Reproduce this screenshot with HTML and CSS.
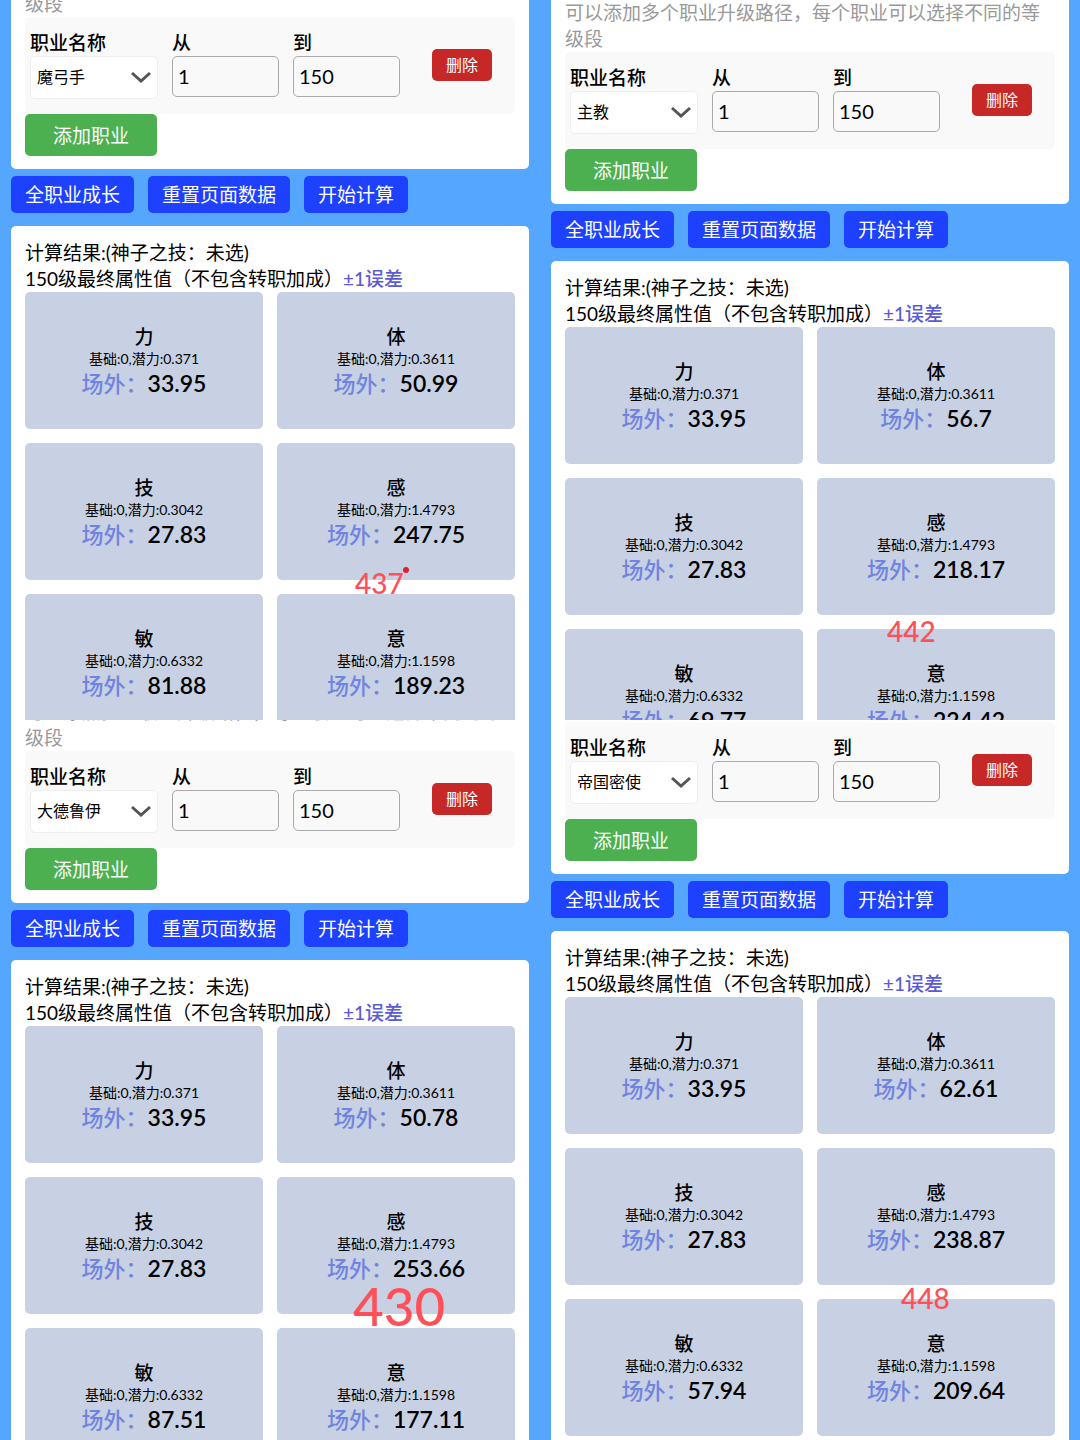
FILE: index.html
```
<!DOCTYPE html>
<html lang="zh-CN">
<head>
  <meta charset="UTF-8">
  <meta name="viewport" content="width=device-width, initial-scale=1.0">
  <title>职业成长计算</title>
  <link rel="stylesheet" href="styles.css">
</head>
<body>
  <main class="board">

    <!-- 魔弓手 -->
    <section class="pane">
      <div class="content scroll-49">
        <div class="card">
          <p class="hint">可以添加多个职业升级路径，每个职业可以选择不同的等级段</p>
          <div class="job-row">
            <div class="field">
              <label for="job-1">职业名称</label>
              <div class="select-box">
                <select id="job-1"><option>魔弓手</option></select>
                <svg class="arrow" viewBox="0 0 22 12"><path d="M2 2l9 8 9-8"/></svg>
              </div>
            </div>
            <div class="field">
              <label for="from-1">从</label>
              <input id="from-1" type="text" value="1">
            </div>
            <div class="field">
              <label for="to-1">到</label>
              <input id="to-1" type="text" value="150">
            </div>
            <button class="delete-btn">删除</button>
          </div>
          <button class="add-btn">添加职业</button>
        </div>
        <div class="toolbar">
          <button>全职业成长</button>
          <button>重置页面数据</button>
          <button>开始计算</button>
        </div>
        <div class="card">
          <p>计算结果:(神子之技：未选)</p>
          <p>150级最终属性值（不包含转职加成）<span class="error">±1误差</span></p>
          <div class="stats">
            <div class="stat"><h3>力</h3><p class="base">基础:0,潜力:0.371</p><p class="value"><span>场外：</span>33.95</p></div>
            <div class="stat"><h3>体</h3><p class="base">基础:0,潜力:0.3611</p><p class="value"><span>场外：</span>50.99</p></div>
            <div class="stat"><h3>技</h3><p class="base">基础:0,潜力:0.3042</p><p class="value"><span>场外：</span>27.83</p></div>
            <div class="stat"><h3>感</h3><p class="base">基础:0,潜力:1.4793</p><p class="value"><span>场外：</span>247.75</p></div>
            <div class="stat"><h3>敏</h3><p class="base">基础:0,潜力:0.6332</p><p class="value"><span>场外：</span>81.88</p></div>
            <div class="stat"><h3>意</h3><p class="base">基础:0,潜力:1.1598</p><p class="value"><span>场外：</span>189.23</p></div>
          </div>
        </div>
      </div>
      <span class="note note-437">437</span>
      <span class="dot"></span>
    </section>

    <!-- 主教 -->
    <section class="pane">
      <div class="content scroll-14">
        <div class="card">
          <p class="hint">可以添加多个职业升级路径，每个职业可以选择不同的等级段</p>
          <div class="job-row">
            <div class="field">
              <label for="job-2">职业名称</label>
              <div class="select-box">
                <select id="job-2"><option>主教</option></select>
                <svg class="arrow" viewBox="0 0 22 12"><path d="M2 2l9 8 9-8"/></svg>
              </div>
            </div>
            <div class="field">
              <label for="from-2">从</label>
              <input id="from-2" type="text" value="1">
            </div>
            <div class="field">
              <label for="to-2">到</label>
              <input id="to-2" type="text" value="150">
            </div>
            <button class="delete-btn">删除</button>
          </div>
          <button class="add-btn">添加职业</button>
        </div>
        <div class="toolbar">
          <button>全职业成长</button>
          <button>重置页面数据</button>
          <button>开始计算</button>
        </div>
        <div class="card">
          <p>计算结果:(神子之技：未选)</p>
          <p>150级最终属性值（不包含转职加成）<span class="error">±1误差</span></p>
          <div class="stats">
            <div class="stat"><h3>力</h3><p class="base">基础:0,潜力:0.371</p><p class="value"><span>场外：</span>33.95</p></div>
            <div class="stat"><h3>体</h3><p class="base">基础:0,潜力:0.3611</p><p class="value"><span>场外：</span>56.7</p></div>
            <div class="stat"><h3>技</h3><p class="base">基础:0,潜力:0.3042</p><p class="value"><span>场外：</span>27.83</p></div>
            <div class="stat"><h3>感</h3><p class="base">基础:0,潜力:1.4793</p><p class="value"><span>场外：</span>218.17</p></div>
            <div class="stat"><h3>敏</h3><p class="base">基础:0,潜力:0.6332</p><p class="value"><span>场外：</span>69.77</p></div>
            <div class="stat"><h3>意</h3><p class="base">基础:0,潜力:1.1598</p><p class="value"><span>场外：</span>224.42</p></div>
          </div>
        </div>
      </div>
      <span class="note note-442">442</span>
    </section>

    <!-- 大德鲁伊 -->
    <section class="pane">
      <div class="content scroll-35">
        <div class="card">
          <p class="hint">可以添加多个职业升级路径，每个职业可以选择不同的等级段</p>
          <div class="job-row">
            <div class="field">
              <label for="job-3">职业名称</label>
              <div class="select-box">
                <select id="job-3"><option>大德鲁伊</option></select>
                <svg class="arrow" viewBox="0 0 22 12"><path d="M2 2l9 8 9-8"/></svg>
              </div>
            </div>
            <div class="field">
              <label for="from-3">从</label>
              <input id="from-3" type="text" value="1">
            </div>
            <div class="field">
              <label for="to-3">到</label>
              <input id="to-3" type="text" value="150">
            </div>
            <button class="delete-btn">删除</button>
          </div>
          <button class="add-btn">添加职业</button>
        </div>
        <div class="toolbar">
          <button>全职业成长</button>
          <button>重置页面数据</button>
          <button>开始计算</button>
        </div>
        <div class="card">
          <p>计算结果:(神子之技：未选)</p>
          <p>150级最终属性值（不包含转职加成）<span class="error">±1误差</span></p>
          <div class="stats">
            <div class="stat"><h3>力</h3><p class="base">基础:0,潜力:0.371</p><p class="value"><span>场外：</span>33.95</p></div>
            <div class="stat"><h3>体</h3><p class="base">基础:0,潜力:0.3611</p><p class="value"><span>场外：</span>50.78</p></div>
            <div class="stat"><h3>技</h3><p class="base">基础:0,潜力:0.3042</p><p class="value"><span>场外：</span>27.83</p></div>
            <div class="stat"><h3>感</h3><p class="base">基础:0,潜力:1.4793</p><p class="value"><span>场外：</span>253.66</p></div>
            <div class="stat"><h3>敏</h3><p class="base">基础:0,潜力:0.6332</p><p class="value"><span>场外：</span>87.51</p></div>
            <div class="stat"><h3>意</h3><p class="base">基础:0,潜力:1.1598</p><p class="value"><span>场外：</span>177.11</p></div>
          </div>
        </div>
      </div>
      <span class="note note-430">430</span>
    </section>

    <!-- 帝国密使 -->
    <section class="pane">
      <div class="content scroll-64">
        <div class="card">
          <p class="hint">可以添加多个职业升级路径，每个职业可以选择不同的等级段</p>
          <div class="job-row">
            <div class="field">
              <label for="job-4">职业名称</label>
              <div class="select-box">
                <select id="job-4"><option>帝国密使</option></select>
                <svg class="arrow" viewBox="0 0 22 12"><path d="M2 2l9 8 9-8"/></svg>
              </div>
            </div>
            <div class="field">
              <label for="from-4">从</label>
              <input id="from-4" type="text" value="1">
            </div>
            <div class="field">
              <label for="to-4">到</label>
              <input id="to-4" type="text" value="150">
            </div>
            <button class="delete-btn">删除</button>
          </div>
          <button class="add-btn">添加职业</button>
        </div>
        <div class="toolbar">
          <button>全职业成长</button>
          <button>重置页面数据</button>
          <button>开始计算</button>
        </div>
        <div class="card">
          <p>计算结果:(神子之技：未选)</p>
          <p>150级最终属性值（不包含转职加成）<span class="error">±1误差</span></p>
          <div class="stats">
            <div class="stat"><h3>力</h3><p class="base">基础:0,潜力:0.371</p><p class="value"><span>场外：</span>33.95</p></div>
            <div class="stat"><h3>体</h3><p class="base">基础:0,潜力:0.3611</p><p class="value"><span>场外：</span>62.61</p></div>
            <div class="stat"><h3>技</h3><p class="base">基础:0,潜力:0.3042</p><p class="value"><span>场外：</span>27.83</p></div>
            <div class="stat"><h3>感</h3><p class="base">基础:0,潜力:1.4793</p><p class="value"><span>场外：</span>238.87</p></div>
            <div class="stat"><h3>敏</h3><p class="base">基础:0,潜力:0.6332</p><p class="value"><span>场外：</span>57.94</p></div>
            <div class="stat"><h3>意</h3><p class="base">基础:0,潜力:1.1598</p><p class="value"><span>场外：</span>209.64</p></div>
          </div>
        </div>
      </div>
      <span class="note note-448">448</span>
    </section>

  </main>
</body>
</html>
```
FILE: styles.css
```
* {
  box-sizing: border-box;
}

body {
  margin: 0;
  background: #54a6ff;
  color: #000;
  font-family: Lato, "Noto Sans CJK SC", sans-serif;
  font-size: 19px;
  line-height: 26px;
}

p,
h3 {
  margin: 0;
}

button,
input,
select {
  font-family: inherit;
  font-size: inherit;
}

button {
  border: none;
  border-radius: 5px;
  color: #fff;
  cursor: pointer;
}

.board {
  display: grid;
  grid-template-columns: 1fr 1fr;
  grid-template-rows: 1fr 1fr;
  height: 100vh;
}

.pane {
  position: relative;
  overflow: hidden;
  min-height: 0;
  padding: 0 11px;
}

/* how far each pane is scrolled */
.scroll-14 { margin-top: -14px; }
.scroll-35 { margin-top: -35px; }
.scroll-49 { margin-top: -49px; }
.scroll-64 { margin-top: -64px; }

.card {
  background: #fff;
  border-radius: 5px;
  padding: 14px 14px 13px;
}

.hint {
  color: #999;
}

.job-row {
  display: grid;
  grid-template-columns: 128fr 107fr 107fr 96fr;
  gap: 14px;
  padding: 13px 5px 15px;
  background: #f9f9f9;
  border-radius: 5px;
}

.field label {
  display: block;
  font-weight: 500;
}

.select-box {
  position: relative;
}

.select-box select {
  display: block;
  width: 100%;
  height: 43px;
  padding: 0 6px 2px;
  border: 1px solid #eee;
  border-radius: 5px;
  background: #fff;
  color: #000;
  font-size: 16px;
  appearance: none;
}

.arrow {
  position: absolute;
  top: 15px;
  right: 6px;
  width: 22px;
  height: 12px;
  fill: none;
  stroke: #555;
  stroke-width: 3;
  pointer-events: none;
}

.field input {
  display: block;
  width: 100%;
  height: 41px;
  padding: 0 5px 2px;
  border: 1px solid #aaa;
  border-radius: 5px;
  background: transparent;
  font-size: 20px;
}

.delete-btn {
  place-self: center;
  height: 32px;
  padding: 0 14px 2px;
  background: #c62828;
  font-size: 16px;
}

.add-btn {
  display: block;
  height: 42px;
  padding: 0 28px 2px;
  background: #4caf50;
}

.toolbar {
  display: flex;
  gap: 14px;
  padding: 7px 0 13px;
}

.toolbar button {
  height: 37px;
  padding: 0 14px 2px;
  background: #1e40ff;
}

.error {
  color: #5b5bd6;
  font-weight: 500;
}

.stats {
  display: grid;
  grid-template-columns: 1fr 1fr;
  gap: 14px;
}

.stat {
  padding: 32px 0 30px;
  background: #c7d1e3;
  border-radius: 5px;
  text-align: center;
}

.stat h3 {
  font-size: 19px;
  font-weight: 500;
}

.stat .base {
  font-size: 14px;
  line-height: 18px;
}

.stat .value {
  font-size: 23px;
  font-weight: 600;
  line-height: 30px;
}

.stat .value span {
  color: #7183e0;
  font-size: 22px;
  font-weight: 500;
}

/* hand-written totals over the tiles */
.note {
  position: absolute;
  color: #ff5058;
  font-size: 28px;
  font-weight: 500;
  line-height: 28px;
}

.note-437 { left: 355px; top: 569px; }
.note-442 { left: 347px; top: 617px; }
.note-448 { left: 361px; top: 564px; }

.note-430 {
  left: 353px;
  top: 559px;
  font-size: 53px;
  line-height: 53px;
}

.dot {
  position: absolute;
  left: 403px;
  top: 567px;
  width: 6px;
  height: 6px;
  border-radius: 50%;
  background: #e0202f;
}
```
